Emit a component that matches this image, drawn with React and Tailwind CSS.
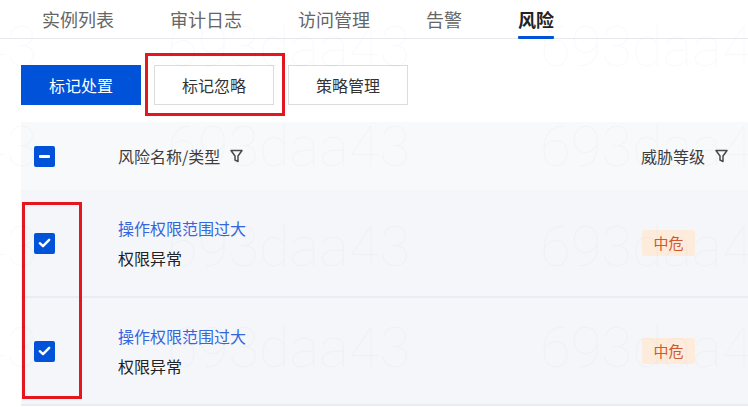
import React from "react";

const FONT = { fontFamily: '"Noto Sans CJK SC", "Noto Sans", sans-serif' };

function Funnel() {
  return (
    <svg width="13" height="14" viewBox="0 0 13 14" fill="none" stroke="#4b4b4b" strokeWidth="1.5" strokeLinejoin="round">
      <path d="M1 1.5h11L8 7v5.5l-3-1.5V7z" />
    </svg>
  );
}

function Check({ mode }) {
  return (
    <div className="w-[21px] h-[21px] rounded-[2px] bg-[#0052d9] flex items-center justify-center">
      {mode === "minus" ? (
        <div className="w-[11px] h-[2.5px] bg-white rounded-[1px]" />
      ) : (
        <svg width="13" height="10" viewBox="0 0 13 10" fill="none" stroke="white" strokeWidth="2.4" strokeLinecap="round" strokeLinejoin="round">
          <path d="M1.8 5.2l3.2 3 6.2-6.4" />
        </svg>
      )}
    </div>
  );
}

function Row() {
  return (
    <div className="grid grid-cols-[97px_523px_1fr] h-[108px] border-b-2 border-[#e9ecf2] items-center">
      <div className="pl-[13px]">
        <Check />
      </div>
      <div className="flex flex-col">
        <span className="text-[16px] leading-[30px] text-[#3566dc]">操作权限范围过大</span>
        <span className="text-[16px] leading-[30px] text-[#222]">权限异常</span>
      </div>
      <div className="pl-[1px]">
        <span className="inline-flex items-center justify-center w-[53px] h-[26px] rounded-[3px] bg-[#fdecdb] text-[15px] text-[#d4582c]">中危</span>
      </div>
    </div>
  );
}

export default function App() {
  const tabs = ["实例列表", "审计日志", "访问管理", "告警", "风险"];
  const wmRows = [27, 127, 227, 328];
  const wmCols = [-206, 167, 540];
  return (
    <div className="relative w-[748px] h-[407px] bg-white overflow-hidden" style={FONT}>
      {/* tabs */}
      <div className="flex h-[39px] border-b border-[#e8e9ee] pl-[42px] gap-[56px]">
        {tabs.map((t, i) => {
          const active = i === tabs.length - 1;
          return (
            <div key={t} className="relative flex items-center pt-[1px]">
              <span className={active ? "text-[18px] font-bold text-[#222]" : "text-[18px] text-[#666]"}>{t}</span>
              {active && <div className="absolute left-0 right-0 bottom-[-1px] h-[3px] bg-[#0052d9] rounded-[1px]" />}
            </div>
          );
        })}
      </div>

      {/* buttons */}
      <div className="flex gap-[13px] pl-[21px] mt-[26px]">
        <button className="w-[120px] h-[40px] bg-[#0052d9] text-white text-[16px]">标记处置</button>
        <div className="relative">
          <button className="w-[120px] h-[40px] bg-white border border-[#dcdcdc] text-[#333] text-[16px]">标记忽略</button>
          <div className="absolute -left-[9px] -top-[12px] w-[140px] h-[63px] border-[3px] border-[#e4161e]" />
        </div>
        <button className="w-[120px] h-[40px] bg-white border border-[#dcdcdc] text-[#333] text-[16px] ml-[1px]">策略管理</button>
      </div>

      {/* table */}
      <div className="relative ml-[21px] mt-[17px] bg-[#f4f6fa]">
        <div className="grid grid-cols-[97px_523px_1fr] h-[68px] bg-[#f8f9fb] items-center">
          <div className="pl-[13px] pt-[1px]">
            <Check mode="minus" />
          </div>
          <div className="flex items-center gap-[10px] text-[16px] text-[#3d3d3d]">
            风险名称/类型 <Funnel />
          </div>
          <div className="flex items-center gap-[10px] text-[16px] text-[#3d3d3d]">
            威胁等级 <Funnel />
          </div>
        </div>
        <Row />
        <Row />
        <div className="absolute left-[1px] top-[80px] w-[60px] h-[197px] border-[3px] border-[#e4161e]" />
      </div>

      {/* watermark */}
      <div className="pointer-events-none absolute inset-0">
        {wmRows.map((y) =>
          wmCols.map((x) => (
            <div
              key={`${x}-${y}`}
              className="absolute text-[56px] leading-none font-thin text-black/[0.018] whitespace-nowrap"
              style={{ left: x, top: y - 8, fontFamily: "Roboto, sans-serif" }}
            >
              693daa43
            </div>
          ))
        )}
      </div>
    </div>
  );
}
